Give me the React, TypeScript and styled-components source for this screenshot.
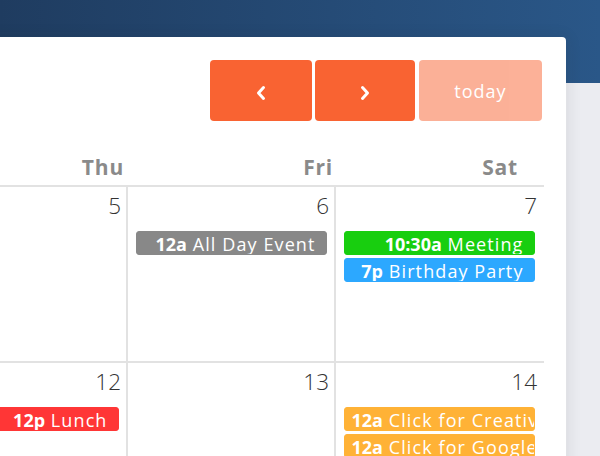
import React from "react";
import styled, { createGlobalStyle } from "styled-components";

const GlobalStyle = createGlobalStyle`
  html, body { margin: 0; padding: 0; }
  body {
    font-family: "Open Sans", "Noto Sans", sans-serif;
    background: #ebecf1;
    overflow: hidden;
  }
  * { box-sizing: border-box; }
`;

const Page = styled.div`
  height: 456px;
  padding: 37px 34px 0 0;
  background: linear-gradient(to right, #1f3c60, #2a5788) top left / 100% 83px no-repeat, #ebecf1;
  overflow: hidden;
`;

const Card = styled.div`
  margin-left: -20px;
  padding-left: 20px;
  height: 460px;
  background: #fff;
  border-radius: 4px;
  box-shadow: 0 1px 15px 1px rgba(39, 39, 39, 0.1);
  overflow: hidden;
`;

const Toolbar = styled.div`
  display: flex;
  justify-content: flex-end;
  gap: 3px;
  padding: 23px 24px 0 0;
`;

const NavButton = styled.button<{ $width: number; $muted?: boolean }>`
  width: ${(p) => p.$width}px;
  height: 61px;
  margin-left: ${(p) => (p.$muted ? 1 : 0)}px;
  border: none;
  border-radius: 4px;
  background: #f96332;
  opacity: ${(p) => (p.$muted ? 0.5 : 1)};
  color: #fff;
  font-family: "Open Sans", sans-serif;
  font-size: 18px;
  letter-spacing: 1px;
  display: flex;
  align-items: center;
  justify-content: center;
  padding: 0;
  cursor: pointer;
`;

const Chevron = styled.svg`
  width: 12px;
  height: 16px;
  margin-top: 4px;
`;

const Calendar = styled.div`
  margin-left: -80px;
  width: 624px;
`;

const HeaderRow = styled.div`
  display: grid;
  grid-template-columns: repeat(3, 208px);
  border-bottom: 2px solid #e2e2e2;
`;

const HeaderCell = styled.div<{ $pad: number }>`
  height: 64px;
  display: flex;
  align-items: flex-end;
  justify-content: flex-end;
  padding: 0 ${(p) => p.$pad}px 7px 0;
  font-weight: 700;
  font-size: 21px;
  line-height: 21px;
  letter-spacing: 0.8px;
  color: #8a8a8a;
`;

const Week = styled.div<{ $height: number }>`
  display: grid;
  grid-template-columns: repeat(3, 208px);
  height: ${(p) => p.$height}px;
  border-bottom: 2px solid #e2e2e2;
`;

const DayCell = styled.div<{ $last?: boolean }>`
  display: flex;
  flex-direction: column;
  padding-top: 7px;
  border-right: 2px solid ${(p) => (p.$last ? "transparent" : "#e2e2e2")};
`;

const DayNumber = styled.div`
  text-align: right;
  padding-right: 5px;
  margin-bottom: 13px;
  font-weight: 300;
  font-size: 22.5px;
  line-height: 24px;
  color: #333;
`;

const Event = styled.div<{ $color: string }>`
  display: flex;
  height: 23.5px;
  margin: 0 7.5px 3.5px;
  padding: 2.5px 10px 0 7px;
  border: 1px solid ${(p) => p.$color};
  border-radius: 3px;
  background: ${(p) => p.$color};
  color: #fff;
  font-size: 18px;
  line-height: 19px;
  white-space: nowrap;
  overflow: hidden;
`;

const EventText = styled.span`
  margin-left: auto;
  flex-shrink: 0;
`;

const EventTime = styled.b`
  font-weight: 700;
`;

const EventTitle = styled.span`
  letter-spacing: 1.1px;
`;

type Ev = { time: string; title: string; color: string };
type Day = { num: number; events: Ev[] };

const weeks: { height: number; days: Day[] }[] = [
  {
    height: 176,
    days: [
      { num: 5, events: [] },
      { num: 6, events: [{ time: "12a", title: "All Day Event", color: "#888888" }] },
      {
        num: 7,
        events: [
          { time: "10:30a", title: "Meeting", color: "#18ce0f" },
          { time: "7p", title: "Birthday Party", color: "#2ca8ff" },
        ],
      },
    ],
  },
  {
    height: 200,
    days: [
      { num: 12, events: [{ time: "12p", title: "Lunch", color: "#ff3636" }] },
      { num: 13, events: [] },
      {
        num: 14,
        events: [
          { time: "12a", title: "Click for Creative Tim", color: "#ffb236" },
          { time: "12a", title: "Click for Google", color: "#ffb236" },
        ],
      },
    ],
  },
];

const headers = [
  { label: "Thu", pad: 4 },
  { label: "Fri", pad: 3 },
  { label: "Sat", pad: 26 },
];

export default function App() {
  return (
    <>
      <GlobalStyle />
      <Page>
        <Card>
          <Toolbar>
            <NavButton $width={102} aria-label="prev">
              <Chevron viewBox="0 0 12 16">
                <polyline points="8.5,2.5 3.5,8 8.5,13.5" fill="none" stroke="#fff" strokeWidth="3" strokeLinecap="round" strokeLinejoin="round" />
              </Chevron>
            </NavButton>
            <NavButton $width={100} aria-label="next">
              <Chevron viewBox="0 0 12 16">
                <polyline points="3.5,2.5 8.5,8 3.5,13.5" fill="none" stroke="#fff" strokeWidth="3" strokeLinecap="round" strokeLinejoin="round" />
              </Chevron>
            </NavButton>
            <NavButton $width={123} $muted>
              today
            </NavButton>
          </Toolbar>
          <Calendar>
            <HeaderRow>
              {headers.map((h) => (
                <HeaderCell key={h.label} $pad={h.pad}>
                  {h.label}
                </HeaderCell>
              ))}
            </HeaderRow>
            {weeks.map((w, wi) => (
              <Week key={wi} $height={w.height}>
                {w.days.map((d, di) => (
                  <DayCell key={d.num} $last={di === w.days.length - 1}>
                    <DayNumber>{d.num}</DayNumber>
                    {d.events.map((e, ei) => (
                      <Event key={ei} $color={e.color}>
                        <EventText>
                          <EventTime>{e.time}</EventTime>
                          <EventTitle> {e.title}</EventTitle>
                        </EventText>
                      </Event>
                    ))}
                  </DayCell>
                ))}
              </Week>
            ))}
          </Calendar>
        </Card>
      </Page>
    </>
  );
}
